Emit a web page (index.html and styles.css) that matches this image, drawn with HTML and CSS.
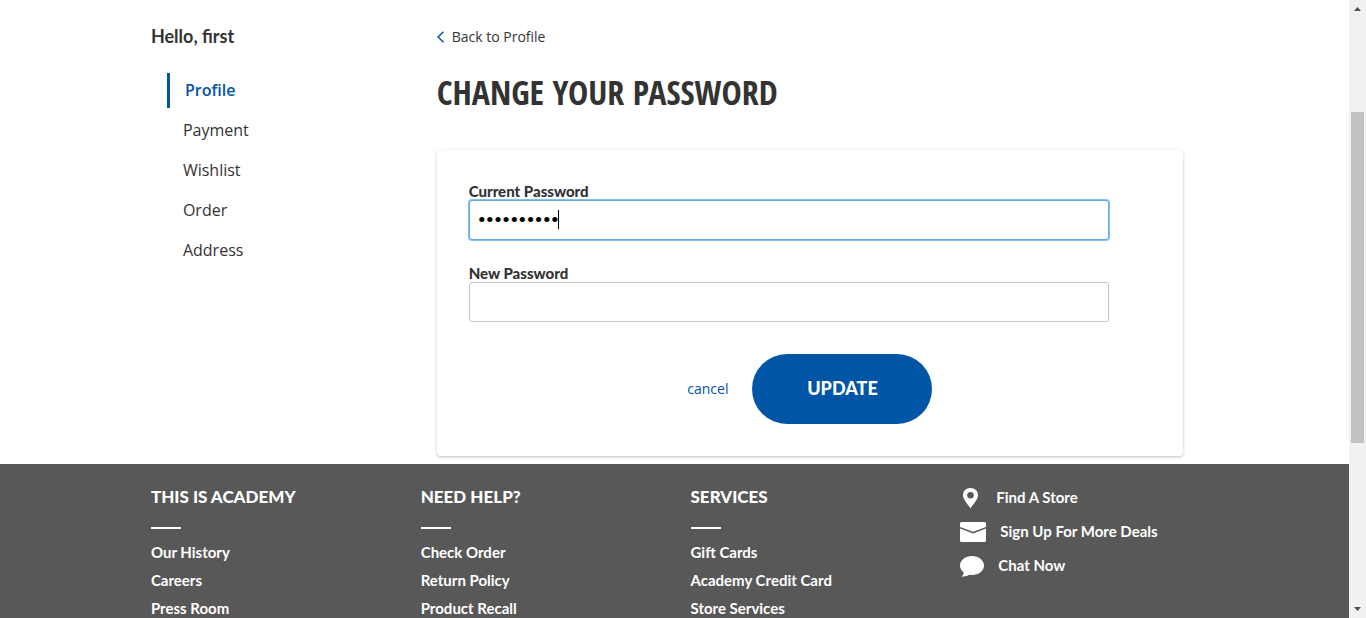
FILE: index.html
```html
<!DOCTYPE html>
<html lang="en">
<head>
<meta charset="utf-8">
<meta name="viewport" content="width=device-width, initial-scale=1">
<title>Change Your Password</title>
<link rel="stylesheet" href="styles.css">
</head>
<body class="window">
<div class="page">
  <div class="container account">
    <aside class="sidebar">
      <p class="greeting">Hello, first</p>
      <nav class="menu" aria-label="Account">
        <a class="menu-link active" href="#profile">Profile</a>
        <a class="menu-link" href="#payment">Payment</a>
        <a class="menu-link" href="#wishlist">Wishlist</a>
        <a class="menu-link" href="#order">Order</a>
        <a class="menu-link" href="#address">Address</a>
      </nav>
    </aside>
    <main class="content">
      <a class="back" href="#profile">
        <svg class="back-icon" viewBox="0 0 8 12" aria-hidden="true"><path d="M6.500 .8 1 6l5.500 5.200" fill="none" stroke="#0055a6" stroke-width="1.500"/></svg>
        Back to Profile
      </a>
      <h1 class="title">CHANGE YOUR PASSWORD</h1>
      <form class="card">
        <div class="field">
          <label class="label" for="current">Current Password</label>
          <div class="input-wrap">
            <input class="input focused" id="current" type="password" value="abcdefghij">
            <span class="caret" aria-hidden="true"></span>
          </div>
        </div>
        <div class="field">
          <label class="label" for="new">New Password</label>
          <input class="input" id="new" type="password">
        </div>
        <div class="actions">
          <a class="cancel" href="#cancel">cancel</a>
          <button class="update" type="submit">UPDATE</button>
        </div>
      </form>
    </main>
  </div>
  <footer class="footer">
    <div class="container footer-columns">
      <section class="column">
        <h2 class="column-title">THIS IS ACADEMY</h2>
        <a class="footer-link" href="#history">Our History</a>
        <a class="footer-link" href="#careers">Careers</a>
        <a class="footer-link" href="#press">Press Room</a>
      </section>
      <section class="column">
        <h2 class="column-title">NEED HELP?</h2>
        <a class="footer-link" href="#check">Check Order</a>
        <a class="footer-link" href="#returns">Return Policy</a>
        <a class="footer-link" href="#recall">Product Recall</a>
      </section>
      <section class="column">
        <h2 class="column-title">SERVICES</h2>
        <a class="footer-link" href="#gift">Gift Cards</a>
        <a class="footer-link" href="#credit">Academy Credit Card</a>
        <a class="footer-link" href="#services">Store Services</a>
      </section>
      <section class="column contact">
        <a class="contact-link" href="#store">
          <svg class="pin" viewBox="0 0 22 22" aria-hidden="true"><path fill="#fff" fill-rule="evenodd" d="M10.500 1C6 1 3 4 3 8.300c0 4.200 4.700 8.700 7.500 13.200C13.300 17 18 12.500 18 8.300 18 4 15 1 10.500 1zm0 4a3.300 3.300 0 1 1 0 6.600 3.300 3.300 0 0 1 0-6.600z"/></svg>
          <span class="contact-text">Find A Store</span>
        </a>
        <a class="contact-link" href="#deals">
          <svg class="mail" viewBox="0 0 26 20" aria-hidden="true"><path fill="#fff" d="M1.500 0h23Q26 0 26 1.500V5L13 9.800 0 5V1.500Q0 0 1.500 0zM0 6.500l13 5 13-5V18.500Q26 20 24.500 20h-23Q0 20 0 18.500z"/></svg>
          <span class="contact-text">Sign Up For More Deals</span>
        </a>
        <a class="contact-link" href="#chat">
          <svg class="chat" viewBox="0 0 24 22" aria-hidden="true"><path fill="#fff" d="M12 1c6.600 0 12 4.200 12 9.500S18.600 20 12 20q-1.300 0-2.500-.2Q6.500 22 1.500 21.500q2-1.500 2.300-4.100Q0 14.500 0 10.500C0 5.200 5.400 1 12 1z"/></svg>
          <span class="contact-text">Chat Now</span>
        </a>
      </section>
    </div>
  </footer>
</div>
<div class="scrollbar" aria-hidden="true">
  <svg class="arrow" viewBox="0 0 17 17"><path fill="#505050" d="M5 11h7L8.500 7z"/></svg>
  <div class="track"><div class="thumb"></div></div>
  <svg class="arrow" viewBox="0 0 17 17"><path fill="#505050" d="M5 6h7l-3.500 4z"/></svg>
</div>
</body>
</html>
```
FILE: styles.css
```css
* { box-sizing: border-box; }

.window {
  margin: 0;
  display: grid;
  grid-template-columns: 1fr 17px;
  height: 100vh;
  overflow: hidden;
  background: #fff;
  color: #333;
  font-family: Lato, "Open Sans", sans-serif;
  font-size: 14px;
  line-height: 20px;
}

a { color: inherit; text-decoration: none; }

.page { height: 100vh; overflow: hidden; }
.container { width: 80%; margin: 0 auto; display: flex; }

.account { padding-bottom: 8px; }
.sidebar { width: 25%; padding: 24px 16px 0; }
.greeting { margin: 0; font-size: 18px; line-height: 24px; font-weight: 700; }
.menu { display: flex; flex-direction: column; gap: 5px; padding: 25px 16px 0; }
.menu-link { padding-left: 16px; font-size: 16px; line-height: 35px; font-family: "Open Sans", sans-serif; }
.menu-link.active { padding-left: 15px; border-left: 3px solid #0055a6; color: #0055a6; font-weight: 600; }

.content { flex: 1; padding: 27px 31px 0 32px; }
.back { display: flex; align-items: center; gap: 7px; font-family: "Open Sans", sans-serif; }
.back-icon { width: 8px; height: 12px; }
.title {
  margin: 25px 0 38px;
  font-family: "Open Sans Condensed", "Roboto Condensed", "Noto Sans Condensed", Roboto, sans-serif;
  font-size: 34px;
  line-height: 40px;
  font-weight: 800;
}

.card {
  padding: 32px;
  border-radius: 4px;
  box-shadow: 0 1px 3px rgba(0, 0, 0, .25);
}
.field { display: flex; flex-direction: column; max-width: 640px; margin-bottom: 32px; }
.field:first-child { margin-bottom: 24px; }
.label { font-size: 15px; line-height: 18px; font-weight: 900; }
.input-wrap { position: relative; display: flex; }
.input {
  width: 100%;
  height: 40px;
  padding: 0 8px 3px;
  border: 1px solid #c4c4c4;
  border-radius: 3px;
  background: #fff;
  color: #000;
  font-family: Lato, sans-serif;
  font-size: 14px;
  outline: none;
}
.input.focused { border-color: #63aae8; box-shadow: 0 0 0 1px #85c0f5; }
.caret { position: absolute; left: 89px; top: 10px; width: 1px; height: 19px; background: #000; }

.actions { display: flex; justify-content: center; align-items: center; gap: 24px; }
.cancel { color: #0055a6; font-family: "Open Sans", sans-serif; }
.update {
  width: 180px;
  height: 70px;
  padding: 0 0 3px;
  border: 0;
  border-radius: 35px;
  background: #0055a6;
  color: #fff;
  font-family: Lato, sans-serif;
  font-size: 18px;
  font-weight: 900;
}

.footer { background: #585858; color: #fff; }
.footer-columns { padding: 20px 0; }
.column { width: 25%; padding: 0 16px; display: flex; flex-direction: column; gap: 8px; }
.column-title { margin: 0 0 5px; font-size: 17px; line-height: 26px; font-weight: 900; }
.column-title::after { content: ""; display: block; width: 30px; height: 2px; margin-top: 17px; background: #fff; }
.footer-link, .contact-link { font-size: 15px; font-weight: 700; }
.contact { gap: 12px; padding-top: 3px; }
.contact-link { display: flex; align-items: center; gap: 14px; height: 22px; }
.contact-text { padding-bottom: 3px; }
.pin { width: 22px; height: 22px; }
.mail { width: 26px; height: 20px; }
.chat { width: 24px; height: 22px; }

.scrollbar { display: flex; flex-direction: column; background: #f1f1f1; }
.arrow { width: 17px; height: 17px; }
.track { flex: 1; padding: 95px 2px 0; }
.thumb { height: 331px; background: #c1c1c1; }
```
